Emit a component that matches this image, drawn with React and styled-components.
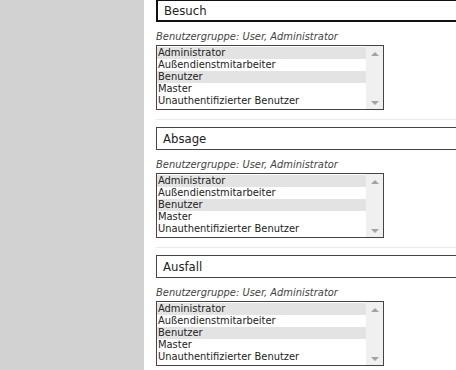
import styled, { createGlobalStyle } from 'styled-components'

const Global = createGlobalStyle`
  html, body {
    margin: 0;
    padding: 0;
    background: #fff;
    overflow: hidden;
  }
  body {
    font-family: "DejaVu Sans Condensed", "DejaVu Sans", Tahoma, sans-serif;
  }
`

const sections = [
  { title: 'Besuch', focused: true },
  { title: 'Absage' },
  { title: 'Ausfall' }
]

const options = [
  { label: 'Administrator', selected: true },
  { label: 'Außendienstmitarbeiter' },
  { label: 'Benutzer', selected: true },
  { label: 'Master' },
  { label: 'Unauthentifizierter Benutzer' }
]

export default function App () {
  return (
    <>
      <Global />
      <Page>
        <Sidebar />
        <Main>
          {sections.map(s => (
            <Section key={s.title}>
              <TitleInput $focused={s.focused}>{s.title}</TitleInput>
              <GroupLabel>Benutzergruppe: User, Administrator</GroupLabel>
              <ListBox>
                <Options>
                  {options.map(o => (
                    <Option key={o.label} $selected={o.selected}>{o.label}</Option>
                  ))}
                </Options>
                <ScrollBar>
                  <Arrow />
                  <Arrow $down />
                </ScrollBar>
              </ListBox>
            </Section>
          ))}
        </Main>
      </Page>
    </>
  )
}

const Page = styled.div`
  display: grid;
  grid-template-columns: 144px 1fr;
  height: 370px;
  width: 456px;
  overflow: hidden;
`
const Sidebar = styled.div`
  background: #d2d2d2;
`
const Main = styled.div`
  padding-left: 12px;
  margin-top: -1px;
`
const Section = styled.div`
  height: 128px;
  &::after {
    content: '';
    display: block;
    height: 1px;
    background: #ebebeb;
    margin-top: 9px;
    width: 320px;
  }
`
const TitleInput = styled.div`
  box-sizing: border-box;
  width: 320px;
  height: 23px;
  border: ${p => p.$focused ? '2px solid #111' : '1px solid #444'};
  padding-left: 6px;
  font-size: 13px;
  line-height: ${p => p.$focused ? '20px' : '22px'};
  color: #222;
`
const GroupLabel = styled.div`
  font-size: 11px;
  font-style: italic;
  color: #444;
  margin-top: 8px;
  line-height: 13px;
`
const ListBox = styled.div`
  box-sizing: border-box;
  margin-top: 2px;
  width: 228px;
  height: 65px;
  border: 1px solid #444;
  display: flex;
`
const Options = styled.div`
  flex: 1;
  padding-top: 1px;
`
const Option = styled.div`
  height: 12px;
  line-height: 12px;
  font-size: 11px;
  padding-left: 1px;
  color: #222;
  white-space: nowrap;
  background: ${p => p.$selected ? '#e3e3e3' : 'transparent'};
`
const ScrollBar = styled.div`
  width: 17px;
  background: #f0f0f0;
  display: flex;
  flex-direction: column;
  justify-content: space-between;
  align-items: center;
  padding: 6px 0 4px;
  box-sizing: border-box;
`
const Arrow = styled.div`
  width: 0;
  height: 0;
  border-left: 4px solid transparent;
  border-right: 4px solid transparent;
  ${p => p.$down
    ? 'border-top: 4px solid #a3a3a3;'
    : 'border-bottom: 4px solid #a3a3a3;'}
`
